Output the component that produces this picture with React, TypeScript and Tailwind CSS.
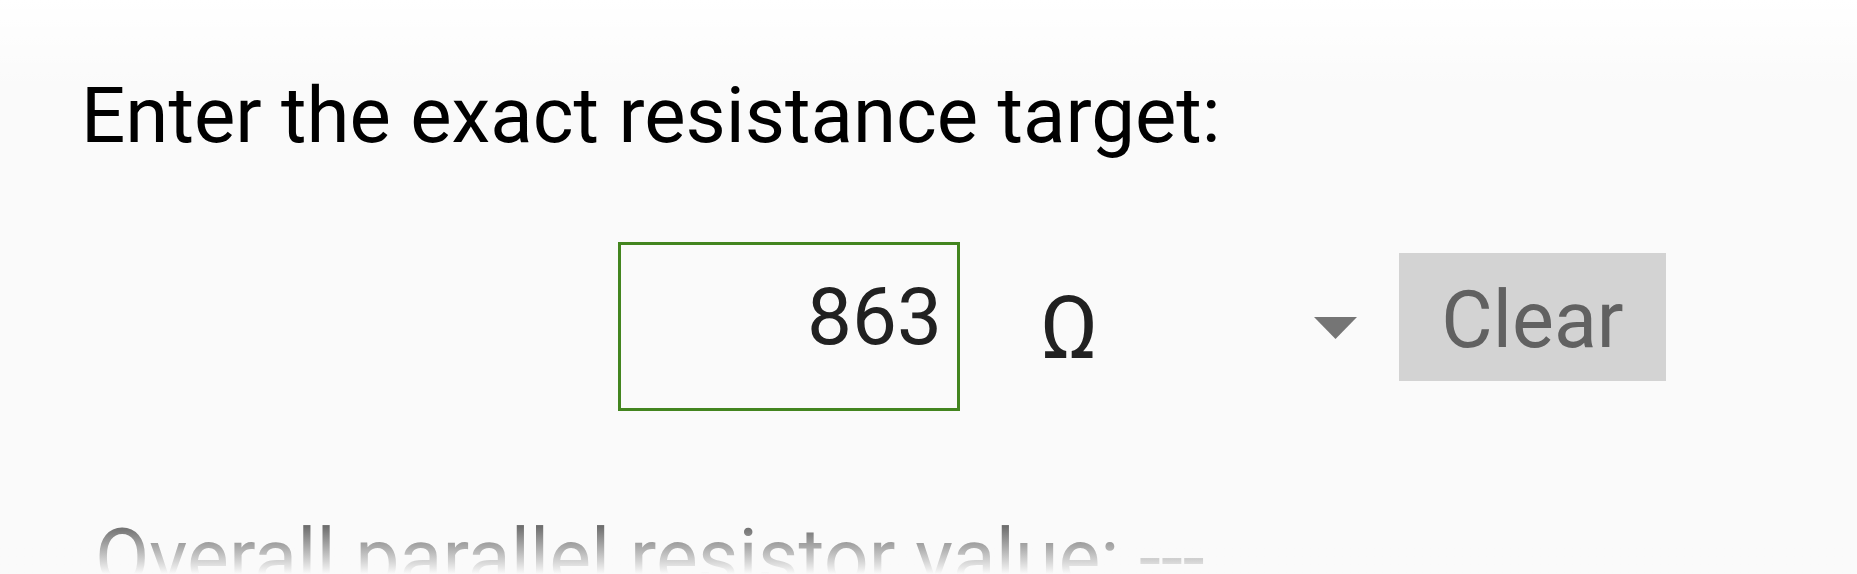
import { useState } from "react";

const App = () => {
  const [value, setValue] = useState("863");
  const [unit, setUnit] = useState("Ω");

  return (
    <div className="relative h-[574px] overflow-hidden bg-[#fafafa] font-['Roboto',sans-serif]">
      <div className="absolute inset-x-0 top-0 h-[90px] bg-gradient-to-b from-white to-[#fafafa]/0" />

      <div className="relative pl-[81px] pt-[77px]">
        <p className="text-[78px] leading-none text-black">
          Enter the exact resistance target:
        </p>

        <div className="mt-[87px] flex items-start pl-[537px]">
          <input
            value={value}
            onChange={(e) => setValue(e.target.value)}
            className="h-[169px] w-[342px] border-[3px] border-[#43851f] bg-[#fafafa] pb-[20px] pr-[15px] text-right text-[80px] leading-none text-[#212121] outline-none"
          />

          <div className="relative ml-[80px] mt-[36px] w-[325px]">
            <select
              value={unit}
              onChange={(e) => setUnit(e.target.value)}
              className="h-[100px] w-full appearance-none bg-transparent text-[88px] leading-none text-[#212121] outline-none"
            >
              <option value="Ω">Ω</option>
              <option value="kΩ">kΩ</option>
              <option value="MΩ">MΩ</option>
            </select>
            <svg
              className="pointer-events-none absolute right-[8px] top-[39px]"
              width="43"
              height="22"
              viewBox="0 0 43 22"
            >
              <path d="M0 0 H43 L21.5 22 Z" fill="#757575" />
            </svg>
          </div>

          <button
            type="button"
            onClick={() => setValue("")}
            className="ml-[34px] mt-[11px] flex h-[128px] w-[267px] items-center justify-center bg-[#d3d3d3] pt-[6px] text-[79px] leading-none text-[#616161]"
          >
            Clear
          </button>
        </div>

        <p className="mt-[108px] pl-[14px] text-[79px] leading-none text-[#616161]">
          Overall parallel resistor value: ---
        </p>
      </div>

      <div className="absolute inset-x-0 bottom-0 h-[52px] bg-gradient-to-b from-[#fafafa]/0 to-[#fafafa]" />
    </div>
  );
};

export default App;
